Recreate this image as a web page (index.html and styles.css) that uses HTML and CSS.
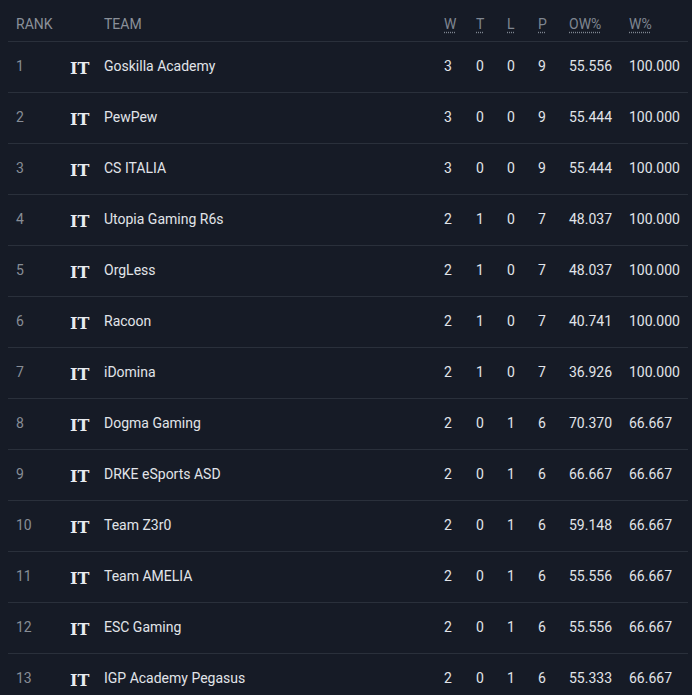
FILE: index.html
```html
<!DOCTYPE html>
<html lang="en">
<head>
<meta charset="utf-8">
<title>Standings</title>
<link rel="stylesheet" href="styles.css">
</head>
<body>
<table class="standings">
  <colgroup>
    <col class="c-rank"><col class="c-flag"><col class="c-team"><col class="c-w"><col class="c-t"><col class="c-l"><col class="c-p"><col class="c-ow"><col class="c-wp">
  </colgroup>
  <thead>
    <tr>
      <th>RANK</th><th></th><th>TEAM</th>
      <th><abbr title="Wins">W</abbr></th>
      <th><abbr title="Ties">T</abbr></th>
      <th><abbr title="Losses">L</abbr></th>
      <th><abbr title="Points">P</abbr></th>
      <th><abbr title="Opponent win percentage">OW%</abbr></th>
      <th><abbr title="Win percentage">W%</abbr></th>
    </tr>
  </thead>
  <tbody>
    <tr><td class="rank">1</td><td><span class="flag">IT</span></td><td>Goskilla Academy</td><td>3</td><td>0</td><td>0</td><td>9</td><td>55.556</td><td>100.000</td></tr>
    <tr><td class="rank">2</td><td><span class="flag">IT</span></td><td>PewPew</td><td>3</td><td>0</td><td>0</td><td>9</td><td>55.444</td><td>100.000</td></tr>
    <tr><td class="rank">3</td><td><span class="flag">IT</span></td><td>CS ITALIA</td><td>3</td><td>0</td><td>0</td><td>9</td><td>55.444</td><td>100.000</td></tr>
    <tr><td class="rank">4</td><td><span class="flag">IT</span></td><td>Utopia Gaming R6s</td><td>2</td><td>1</td><td>0</td><td>7</td><td>48.037</td><td>100.000</td></tr>
    <tr><td class="rank">5</td><td><span class="flag">IT</span></td><td>OrgLess</td><td>2</td><td>1</td><td>0</td><td>7</td><td>48.037</td><td>100.000</td></tr>
    <tr><td class="rank">6</td><td><span class="flag">IT</span></td><td>Racoon</td><td>2</td><td>1</td><td>0</td><td>7</td><td>40.741</td><td>100.000</td></tr>
    <tr><td class="rank">7</td><td><span class="flag">IT</span></td><td>iDomina</td><td>2</td><td>1</td><td>0</td><td>7</td><td>36.926</td><td>100.000</td></tr>
    <tr><td class="rank">8</td><td><span class="flag">IT</span></td><td>Dogma Gaming</td><td>2</td><td>0</td><td>1</td><td>6</td><td>70.370</td><td>66.667</td></tr>
    <tr><td class="rank">9</td><td><span class="flag">IT</span></td><td>DRKE eSports ASD</td><td>2</td><td>0</td><td>1</td><td>6</td><td>66.667</td><td>66.667</td></tr>
    <tr><td class="rank">10</td><td><span class="flag">IT</span></td><td>Team Z3r0</td><td>2</td><td>0</td><td>1</td><td>6</td><td>59.148</td><td>66.667</td></tr>
    <tr><td class="rank">11</td><td><span class="flag">IT</span></td><td>Team AMELIA</td><td>2</td><td>0</td><td>1</td><td>6</td><td>55.556</td><td>66.667</td></tr>
    <tr><td class="rank">12</td><td><span class="flag">IT</span></td><td>ESC Gaming</td><td>2</td><td>0</td><td>1</td><td>6</td><td>55.556</td><td>66.667</td></tr>
    <tr><td class="rank">13</td><td><span class="flag">IT</span></td><td>IGP Academy Pegasus</td><td>2</td><td>0</td><td>1</td><td>6</td><td>55.333</td><td>66.667</td></tr>
  </tbody>
</table>
</body>
</html>
```

FILE: styles.css
```css
html, body {
  margin: 0;
  padding: 0;
  background: #161b26;
}
body {
  padding: 0 4px 0 8px;
  font-family: Roboto, "Liberation Sans", sans-serif;
  font-size: 14px;
  color: #e1e4e9;
}
.standings {
  width: 680px;
  table-layout: fixed;
  border-collapse: collapse;
}
.c-rank { width: 54px; }
.c-flag { width: 34px; }
.c-team { width: 340px; }
.c-w { width: 32px; }
.c-t { width: 31px; }
.c-l { width: 31px; }
.c-p { width: 31px; }
.c-ow { width: 60px; }
.c-wp { width: 67px; }

.standings th {
  height: 41px;
  padding: 7px 8px 0;
  text-align: left;
  font-weight: 400;
  color: #8a9099;
  border-bottom: 1px solid #2a303b;
  vertical-align: middle;
  box-sizing: border-box;
}
.standings th abbr {
  text-decoration: underline dotted;
  text-underline-offset: 3px;
  color: #7f8691;
}
.standings td {
  height: 51px;
  padding: 0 8px 2px;
  border-bottom: 1px solid #2a303b;
  vertical-align: middle;
  white-space: nowrap;
  box-sizing: border-box;
}
.standings td.rank {
  color: #878d96;
}
.flag {
  font-family: "DejaVu Serif", serif;
  font-weight: bold;
  font-size: 16px;
  color: #e8ebef;
  vertical-align: -7px;
}
```
